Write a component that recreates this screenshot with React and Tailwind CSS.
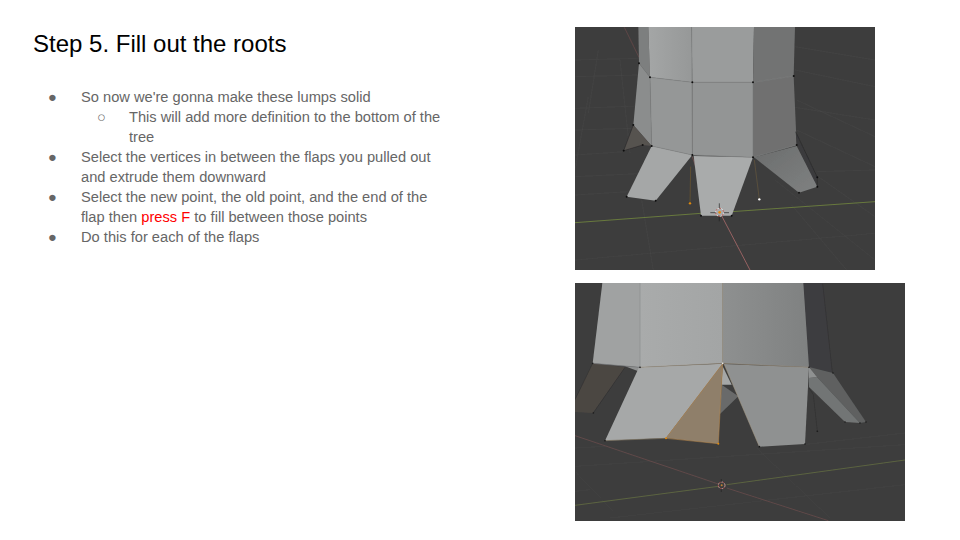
const A = "font-['Liberation_Sans',Arial,sans-serif]";

function Poly({ p, f, s, w = 1.5 }) {
  return <polygon points={p} fill={f} stroke={s || "none"} strokeWidth={w} />;
}
function L({ d, c = "#4d4d4d", w = 1.5 }) {
  return <path d={d} stroke={c} strokeWidth={w} fill="none" />;
}
function Dots({ pts, c = "#111", r = 3 }) {
  return <>{pts.map(([x, y], i) => <circle key={i} cx={x} cy={y} r={r} fill={c} />)}</>;
}

function RenderTop() {
  return (
    <svg viewBox="0 21 900 729" className="block w-[300px] h-[243px]">
      <defs>
        <filter id="b1" x="-5%" y="-5%" width="110%" height="110%"><feGaussianBlur stdDeviation="1.5" /></filter>
        <linearGradient id="t1" x1="0" y1="0" x2="1" y2="0"><stop offset="0" stopColor="#a4a6a6" /><stop offset="1" stopColor="#969898" /></linearGradient>
        <linearGradient id="fr" x1="0" y1="0" x2="1" y2="1"><stop offset="0" stopColor="#6b6d6d" /><stop offset="1" stopColor="#7f8181" /></linearGradient>
      </defs>
      <g filter="url(#b1)">
        <rect x="-5" y="15" width="915" height="745" fill="#3d3d3d" />
        {[
          "M0 265 L190 258", "M660 262 L900 300", "M0 330 L175 325", "M0 405 L150 395", "M0 525 L160 515",
          "M660 80 L900 120", "M660 150 L900 200", "M665 240 L900 350", "M665 330 L900 440", "M730 470 L900 590",
          "M0 470 L210 460", "M725 455 L900 450", "M0 720 L900 640",
          "M40 230 L0 450", "M70 90 L40 280", "M135 120 L165 400", "M200 540 L235 750",
          "M650 555 L815 750", "M600 480 L900 720", "M0 170 L190 165", "M0 120 L190 115",
        ].map((d, i) => <L key={i} d={d} c="#494949" />)}
        <L d="M0 608 L378 580 M470 575 L900 545" c="#71853f" w={2.5} />
        <L d="M148 22 L192 112" c="#6e4a4a" w={2} />
        <L d="M352 410 L362 440" c="#8a5a5a" w={2} />
        <L d="M435 578 L525 750" c="#a86a6a" w={2.5} />

        <Poly p="190,20 220,20 225,172 192,130" f="#7d7f7f" />
        <Poly p="220,20 350,20 352,187 225,172" f="url(#t1)" />
        <Poly p="350,20 537,20 534,187 352,187" f="#9a9c9c" />
        <Poly p="537,20 660,20 656,168 534,187" f="#727373" />
        <Poly p="192,130 225,172 230,378 175,315" f="#8b8d8d" />
        <Poly p="225,172 352,187 352,405 230,378" f="#959797" />
        <Poly p="352,187 534,187 534,412 352,405" f="#939595" />
        <Poly p="534,187 656,168 665,375 534,412" f="#6f7070" />
        <Poly p="175,315 230,378 203,375 146,392" f="#575250" />
        <Poly p="662,335 727,472 727,500 665,375" f="#3a3a3c" />
        <Poly p="230,378 352,405 242,542 155,530" f="#a5a7a7" />
        <Poly p="356,408 534,412 470,587 378,587" f="#a9abab" />
        <Poly p="537,412 665,378 727,500 672,518" f="url(#fr)" />

        <L d="M225 172 L352 187 L534 187 L656 168" c="#828484" w={2} />
        <L d="M230 378 L352 405 L534 412 L665 375" c="#838585" w={2} />
        <L d="M350 22 L352 405 M534 187 L534 412" c="#747676" w={1.5} />
        <L d="M225 172 L230 378 M192 130 L225 172" c="#7a7c7c" w={1.5} />
        <L d="M175 315 L146 392 L203 375 M662 335 L727 472 L727 500" c="#222" w={1.5} />

        <L d="M347 440 L345 550" c="#7f6128" w={1.5} />
        <L d="M538 420 L553 538" c="#75603a" w={1.5} />
        <Dots pts={[[345, 550]]} c="#e08a10" r={3.5} />
        <Dots pts={[[553, 538]]} c="#fff" r={3.5} />

        <Dots pts={[[192, 130], [225, 172], [352, 187], [534, 187], [656, 168], [175, 315], [230, 378], [352, 405], [534, 412], [665, 375], [146, 392], [203, 375], [155, 530], [242, 542], [378, 587], [470, 587], [672, 518], [727, 500], [727, 472]]} />

        <circle cx="434" cy="577" r="12" fill="none" stroke="#e9e9e9" strokeWidth="3" strokeDasharray="7 5" />
        <circle cx="434" cy="577" r="12" fill="none" stroke="#c0504a" strokeWidth="3" strokeDasharray="5 7" strokeDashoffset="6" />
        <L d="M433 550 L433 565 M433 590 L433 604 M406 578 L422 578 M446 578 L462 578" c="#222" w={2} />
        <circle cx="434" cy="577" r="4" fill="#e88a10" />
      </g>
    </svg>
  );
}

function RenderBottom() {
  return (
    <svg viewBox="15 15 990 714" className="block w-[330px] h-[238px]">
      <defs>
        <filter id="b2" x="-5%" y="-5%" width="110%" height="110%"><feGaussianBlur stdDeviation="1.5" /></filter>
        <linearGradient id="m1" x1="0" y1="0" x2="1" y2="0"><stop offset="0" stopColor="#a9abab" /><stop offset="1" stopColor="#a3a5a5" /></linearGradient>
        <linearGradient id="m2" x1="0" y1="0" x2="1" y2="0"><stop offset="0" stopColor="#8e9090" /><stop offset="1" stopColor="#7f8181" /></linearGradient>
      </defs>
      <g filter="url(#b2)">
        <rect x="5" y="5" width="1010" height="735" fill="#3d3d3d" />
        {[
          "M15 510 L105 505", "M15 565 L1005 500", "M15 640 L60 635", "M120 720 L1005 620",
          "M700 500 L1005 465", "M15 580 L130 700", "M560 510 L780 720",
        ].map((d, i) => <L key={i} d={d} c="#464646" />)}
        <L d="M15 682 L445 625 M470 620 L1005 546" c="#616b41" w={2.5} />
        <L d="M15 473 L445 618 M470 630 L775 728" c="#664a4a" w={2.5} />

        <Poly p="700,15 760,15 787,283 717,268" f="#3e3d40" />
        <L d="M758 17 L787 283" c="#2c2c2c" w={1.5} />
        <Poly p="68,256 165,268 68,405 15,402 15,365" f="#4c4743" />
        <L d="M68 256 L15 365 M165 268 L70 405" c="#2c2c2c" w={1.5} />
        <Poly p="165,265 210,268 205,280" f="#8f9191" />

        {/* right rear flap: dark upper band, lighter lower band, pale corner */}
        <Poly p="717,267 789,285 888,432 870,435 741,297" f="#5e6060" />
        <Poly p="717,300 741,297 870,435 825,432 717,327" f="#727474" />
        <Poly p="717,267 741,297 717,300" f="#8f9191" />
        <L d="M717 330 L730 350 L742 460" c="#2c2c2c" w={1.5} />

        <Poly p="455,320 505,355 450,408" f="#696b6b" />
        <Poly p="458,265 485,320 455,320" f="#a5a7a7" />

        <Poly p="97,15 210,15 210,268 68,256" f="#a0a2a2" />
        <Poly p="210,15 458,15 458,256 210,268" f="url(#m1)" />
        <Poly p="458,15 700,15 717,268 458,256" f="url(#m2)" />
        <Poly p="207,268 458,257 288,480 105,488" f="#a6a8a8" />
        <Poly p="458,257 445,497 288,480" f="#8f7f6a" />
        <Poly p="462,258 717,268 705,498 568,506" f="#8f9191" />

        <L d="M68 256 L210 268" c="#77797a" w={2} />
        <L d="M210 15 L210 268" c="#8c8e8e" w={2} />
        <L d="M210 268 L458 256 L717 268" c="#9f8f77" w={1.5} />
        <L d="M458 15 L458 256" c="#a99a82" w={1.5} />
        <L d="M458 257 L288 481 L445 497 L458 257" c="#c08a48" w={1.5} />
        <L d="M105 488 L288 481" c="#7a6f5c" w={2} />
        <L d="M462 258 L568 506" c="#a99a82" w={1.5} />

        <Dots pts={[[68, 256], [210, 268], [717, 268], [789, 285], [105, 488], [70, 405], [568, 506], [705, 498], [742, 460], [825, 432], [870, 435], [888, 432]]} c="#1a1a1a" r={2.5} />
        <Dots pts={[[288, 481], [445, 497]]} c="#e08a10" r={3} />
        <Dots pts={[[458, 256]]} c="#eee" r={2.5} />

        <circle cx="455" cy="622" r="10" fill="none" stroke="#c9a9a0" strokeWidth="3" strokeDasharray="6 5" />
        <circle cx="455" cy="622" r="10" fill="none" stroke="#a8484a" strokeWidth="3" strokeDasharray="5 6" strokeDashoffset="6" />
        <L d="M454 603 L454 612 M454 632 L454 642" c="#222" w={2} />
        <circle cx="455" cy="622" r="3" fill="#c08030" />
      </g>
    </svg>
  );
}

function Item({ level = 0, children }) {
  return (
    <li className={level ? "flex pl-[48px]" : "flex"}>
      <span className={level ? "w-[48px] shrink-0 pl-[16px] text-[#666666]" : "w-[48px] shrink-0 pl-[15px] text-[#666666]"}>
        {level ? "○" : "●"}
      </span>
      <span className="min-w-0">{children}</span>
    </li>
  );
}

export default function App() {
  return (
    <div className={`${A} w-[960px] h-[540px] bg-white flex overflow-hidden`}>
      <div className="w-[575px] shrink-0 pl-[33px] pt-[27px]">
        <h1 className="text-[24px] leading-[34px] text-black font-normal">Step 5. Fill out the roots</h1>
        <ul className="mt-[26px] w-[411px] text-[14.67px] leading-[20px] text-[#666666]">
          <Item>So now we're gonna make these lumps solid</Item>
          <Item level={1}>This will add more definition to the bottom of the tree</Item>
          <Item>Select the vertices in between the flaps you pulled out and extrude them downward</Item>
          <Item>Select the new point, the old point, and the end of the flap then <span className="text-[#ff0000]">press F</span> to fill between those points</Item>
          <Item>Do this for each of the flaps</Item>
        </ul>
      </div>
      <div className="flex flex-col items-start gap-[13px] pt-[27px]">
        <RenderTop />
        <RenderBottom />
      </div>
    </div>
  );
}
